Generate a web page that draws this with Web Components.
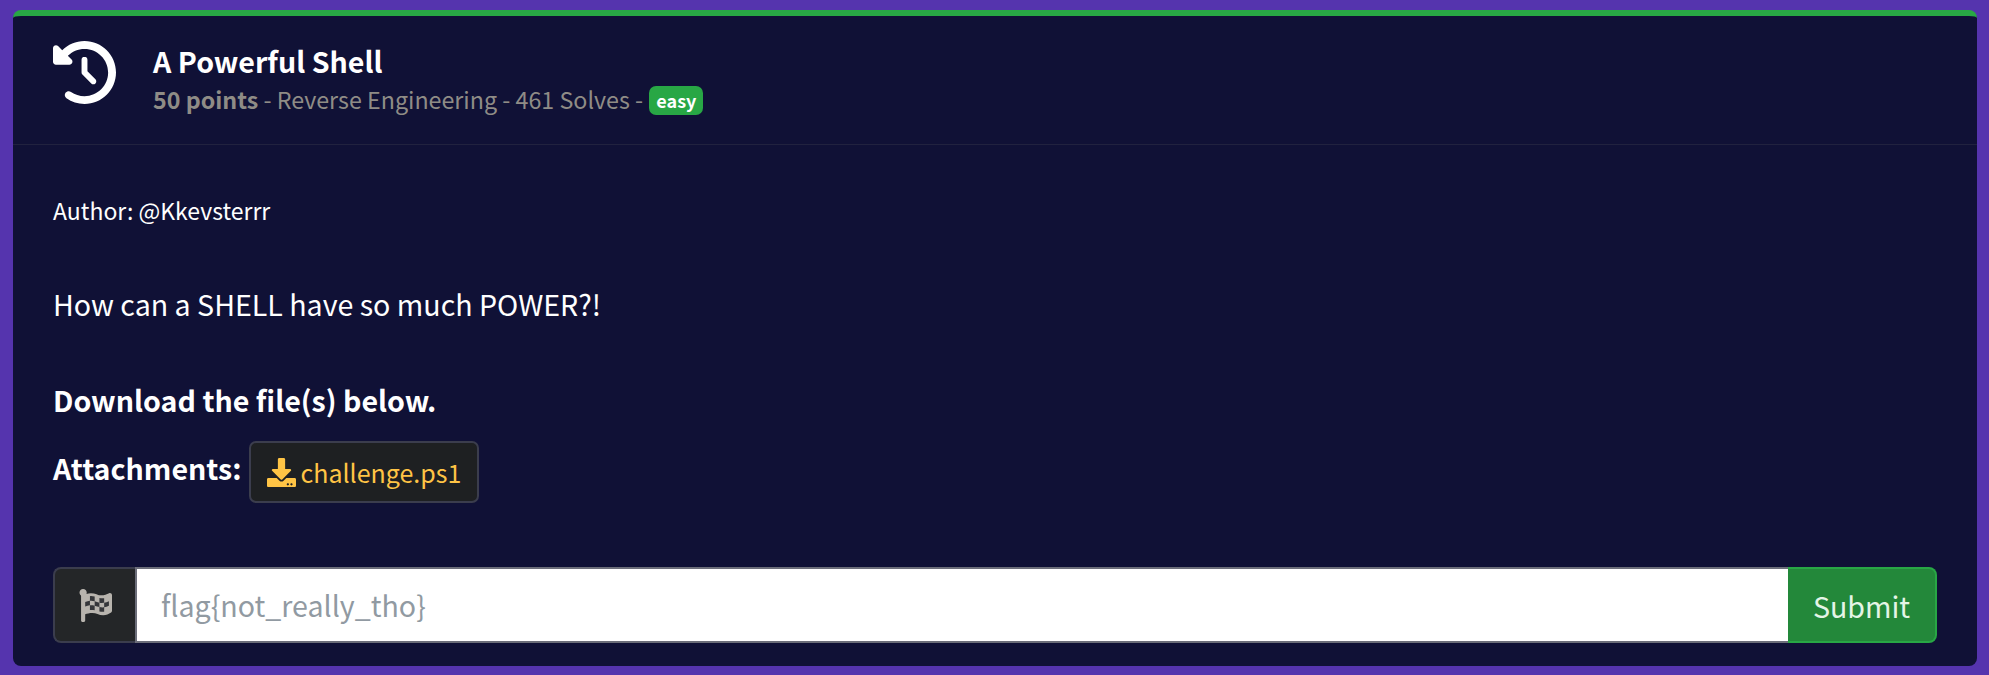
<!DOCTYPE html>
<html lang="en">
<head>
<meta charset="utf-8">
<title>A Powerful Shell</title>
<style>
    html, body {
        margin: 0;
        height: 100%;
    }
    body {
        background: #5534ae;
        font-family: "Noto Sans CJK JP", "Noto Sans", sans-serif;
        color: #fff;
        overflow: hidden;
    }
</style>
</head>
<body>
<challenge-card>
    <challenge-header slot="header" name="A Powerful Shell" points="50 points" meta="Reverse Engineering - 461 Solves" level="easy"></challenge-header>
    <challenge-body></challenge-body>
    <flag-form slot="footer" placeholder="flag{not_really_tho}"></flag-form>
</challenge-card>

<script>
class ChallengeCard extends HTMLElement {
    constructor() {
        super();
        this.attachShadow({ mode: 'open' });
        this.shadowRoot.innerHTML = `
            <style>
                :host {
                    display: block;
                    box-sizing: border-box;
                    margin: 10px 12px 0 13px;
                    height: 656px;
                    background: #101136;
                    border-top: 6px solid #28a745;
                    border-radius: 8px;
                    overflow: hidden;
                }
                .footer {
                    display: block;
                    padding: 0 40px 0 40px;
                }
            </style>
            <slot name="header"></slot>
            <slot></slot>
            <div class="footer"><slot name="footer"></slot></div>
        `;
    }
}
customElements.define('challenge-card', ChallengeCard);

class ChallengeHeader extends HTMLElement {
    connectedCallback() {
        this.attachShadow({ mode: 'open' });
        this.shadowRoot.innerHTML = `
            <style>
                :host {
                    display: flex;
                    box-sizing: border-box;
                    height: 129px;
                    padding: 27px 40px 0 40px;
                    border-bottom: 1px solid #21223f;
                }
                svg {
                    width: 63px;
                    height: 63px;
                    margin-top: -2px;
                    fill: #fff;
                    flex: none;
                }
                .text {
                    margin-left: 37px;
                }
                h3 {
                    margin: 0;
                    font-size: 28.6px;
                    line-height: 36px;
                    font-weight: 700;
                }
                .sub {
                    display: flex;
                    align-items: center;
                    margin-top: 2px;
                    font-size: 23.25px;
                    line-height: 36px;
                    color: #8f8c86;
                    white-space: pre;
                }
                b {
                    font-weight: 700;
                }
                .badge {
                    margin: 3px 0 0 1px;
                    padding: 0 7px;
                    height: 29px;
                    line-height: 29px;
                    font-size: 18px;
                    font-weight: 700;
                    color: #fff;
                    background: #28a745;
                    border-radius: 7px;
                }
            </style>
            <svg viewBox="0 0 512 512"><path d="M75 75L41 41C25.9 25.9 0 36.6 0 57.9V168c0 13.3 10.7 24 24 24H134.1c21.4 0 32.1-25.9 17-41l-30.8-30.8C155 85.5 203 64 256 64c106 0 192 86 192 192s-86 192-192 192c-40.8 0-78.6-12.7-109.7-34.4c-14.5-10.1-34.4-6.6-44.6 7.9s-6.6 34.4 7.9 44.6C151.2 495 201.7 512 256 512c141.4 0 256-114.6 256-256S397.4 0 256 0C185.3 0 121.3 28.7 75 75zm181 53c-13.3 0-24 10.7-24 24V256c0 6.4 2.5 12.5 7 17l72 72c9.4 9.4 24.6 9.4 33.9 0s9.4-24.6 0-33.9l-65-65V152c0-13.3-10.7-24-24-24z"/></svg>
            <div class="text">
                <h3>${this.getAttribute('name')}</h3>
                <div class="sub"><b>${this.getAttribute('points')}</b> - ${this.getAttribute('meta')} - <span class="badge">${this.getAttribute('level')}</span></div>
            </div>
        `;
    }
}
customElements.define('challenge-header', ChallengeHeader);

class ChallengeBody extends HTMLElement {
    constructor() {
        super();
        this.attachShadow({ mode: 'open' });
        this.shadowRoot.innerHTML = `
            <style>
                :host {
                    display: block;
                    padding: 48px 40px 0 40px;
                    height: 422px;
                    box-sizing: border-box;
                }
                p {
                    margin: 0;
                }
                .author {
                    font-size: 23px;
                    line-height: 34px;
                }
                .desc {
                    margin-top: 57px;
                    font-size: 28.6px;
                    line-height: 40px;
                }
                .dl {
                    margin-top: 56px;
                    font-size: 28.6px;
                    line-height: 40px;
                    font-weight: 700;
                }
                .attach {
                    display: flex;
                    align-items: center;
                    margin-top: 21px;
                    font-size: 28.6px;
                    font-weight: 700;
                }
                .attach span {
                    margin-top: -9px;
                }
            </style>
            <p class="author">Author: @Kkevsterrr</p>
            <p class="desc">How can a SHELL have so much POWER?!</p>
            <p class="dl">Download the file(s) below.</p>
            <div class="attach"><span>Attachments:</span><file-button name="challenge.ps1"></file-button></div>
        `;
    }
}
customElements.define('challenge-body', ChallengeBody);

class FileButton extends HTMLElement {
    connectedCallback() {
        this.attachShadow({ mode: 'open' });
        this.shadowRoot.innerHTML = `
            <style>
                :host {
                    display: inline-flex;
                    align-items: center;
                    box-sizing: border-box;
                    height: 62px;
                    margin-left: 8px;
                    padding: 0 16px;
                    background: #1e2022;
                    border: 2px solid #3b3d4d;
                    border-radius: 7px;
                    color: #ffc445;
                    font-size: 25px;
                    font-weight: 400;
                }
                svg {
                    width: 29px;
                    height: 29px;
                    margin-right: 4px;
                    fill: #ffc445;
                }
            </style>
            <svg viewBox="0 0 512 512"><path d="M216 0h80c13.3 0 24 10.7 24 24v168h87.7c17.8 0 26.7 21.5 14.1 34.1L269.7 378.3c-7.5 7.5-19.8 7.5-27.3 0L90.1 226.1c-12.6-12.6-3.7-34.1 14.1-34.1H192V24c0-13.3 10.7-24 24-24zm296 376v112c0 13.3-10.7 24-24 24H24c-13.3 0-24-10.7-24-24V376c0-13.3 10.7-24 24-24h146.7l49 49c20.1 20.1 52.5 20.1 72.6 0l49-49H488c13.3 0 24 10.7 24 24zm-124 88c0-11-9-20-20-20s-20 9-20 20 9 20 20 20 20-9 20-20zm64 0c0-11-9-20-20-20s-20 9-20 20 9 20 20 20 20-9 20-20z"/></svg>
            <span>${this.getAttribute('name')}</span>
        `;
    }
}
customElements.define('file-button', FileButton);

class FlagForm extends HTMLElement {
    connectedCallback() {
        this.attachShadow({ mode: 'open' });
        this.shadowRoot.innerHTML = `
            <style>
                :host {
                    display: flex;
                    height: 76px;
                    font-size: 28.6px;
                }
                .icon {
                    display: flex;
                    align-items: center;
                    justify-content: center;
                    box-sizing: border-box;
                    width: 82px;
                    background: #242628;
                    border: 2px solid #3b3d4d;
                    border-right: none;
                    border-radius: 8px 0 0 8px;
                }
                svg {
                    width: 33px;
                    height: 33px;
                }
                input {
                    flex: 1;
                    min-width: 0;
                    box-sizing: border-box;
                    padding: 0 24px 2px 24px;
                    background: #fff;
                    border: 2px solid #6c6e7a;
                    border-right: none;
                    outline: none;
                    font: inherit;
                    color: #333;
                }
                input::placeholder {
                    color: #919aa2;
                    opacity: 1;
                }
                button {
                    box-sizing: border-box;
                    width: 149px;
                    background: #23883a;
                    border: 2px solid #28a745;
                    border-left: none;
                    border-radius: 0 8px 8px 0;
                    color: #e4f5e6;
                    font: inherit;
                    padding: 0;
                }
            </style>
            <div class="icon">
                <svg viewBox="0 0 512 512">
                    <path fill="#b8b4ae" d="M466.5 66.9c-34.3 15.9-76.5 31.9-117 31.9C296 98.8 251.7 64 184.3 64c-25 0-47.3 4.4-68 12 2.8-7.3 4.1-15.2 3.6-23.6C118.1 24 94.8 1.2 66.3 0 34.3-1.3 8 24.3 8 56c0 19 9.5 35.8 24 45.9V488c0 13.3 10.7 24 24 24h16c13.3 0 24-10.7 24-24v-94.4c28.3-12.1 63.6-22.1 114.4-22.1 53.6 0 97.8 34.8 165.2 34.8 48.2 0 86.7-16.3 122.5-40.9 8.7-6 13.8-15.8 13.8-26.4V95.9c.1-23.3-24.2-38.8-45.4-29z"/>
                    <path fill="#35363a" d="M96 200.6c26-9.2 47.4-15.7 73.6-18.3v71.6c-26 2.6-47.5 9-73.6 18.3zM169.6 110.6c26-2.6 49 .6 73.6 7.7v71.6c-24.6-7-47.6-10.2-73.6-7.6zM243.2 189.9c24.2 6.7 47.6 16.4 73.6 22.2v68.2c-24.3-6.7-47.5-16.4-73.6-22.3zM316.8 140.8c24 5 49.5 6 73.6 2.2v70.6c-24 3.7-49.6 3.5-73.6-1.5zM390.4 213.6c24-3.6 49-12 73.6-22.4v69.6c-24 12-49 20.6-73.6 23.6zM169.6 253.9c26-2.6 49 .6 73.6 4.1v70.6c-24.6-4-47.6-5.7-73.6-3.1zM316.8 280.3c24 5 49.5 6.4 73.6 4v68.4c-24 2.5-49.6.8-73.6-4.8z"/>
                </svg>
            </div>
            <input type="text" placeholder="${this.getAttribute('placeholder')}">
            <button>Submit</button>
        `;
    }
}
customElements.define('flag-form', FlagForm);
</script>
</body>
</html>
